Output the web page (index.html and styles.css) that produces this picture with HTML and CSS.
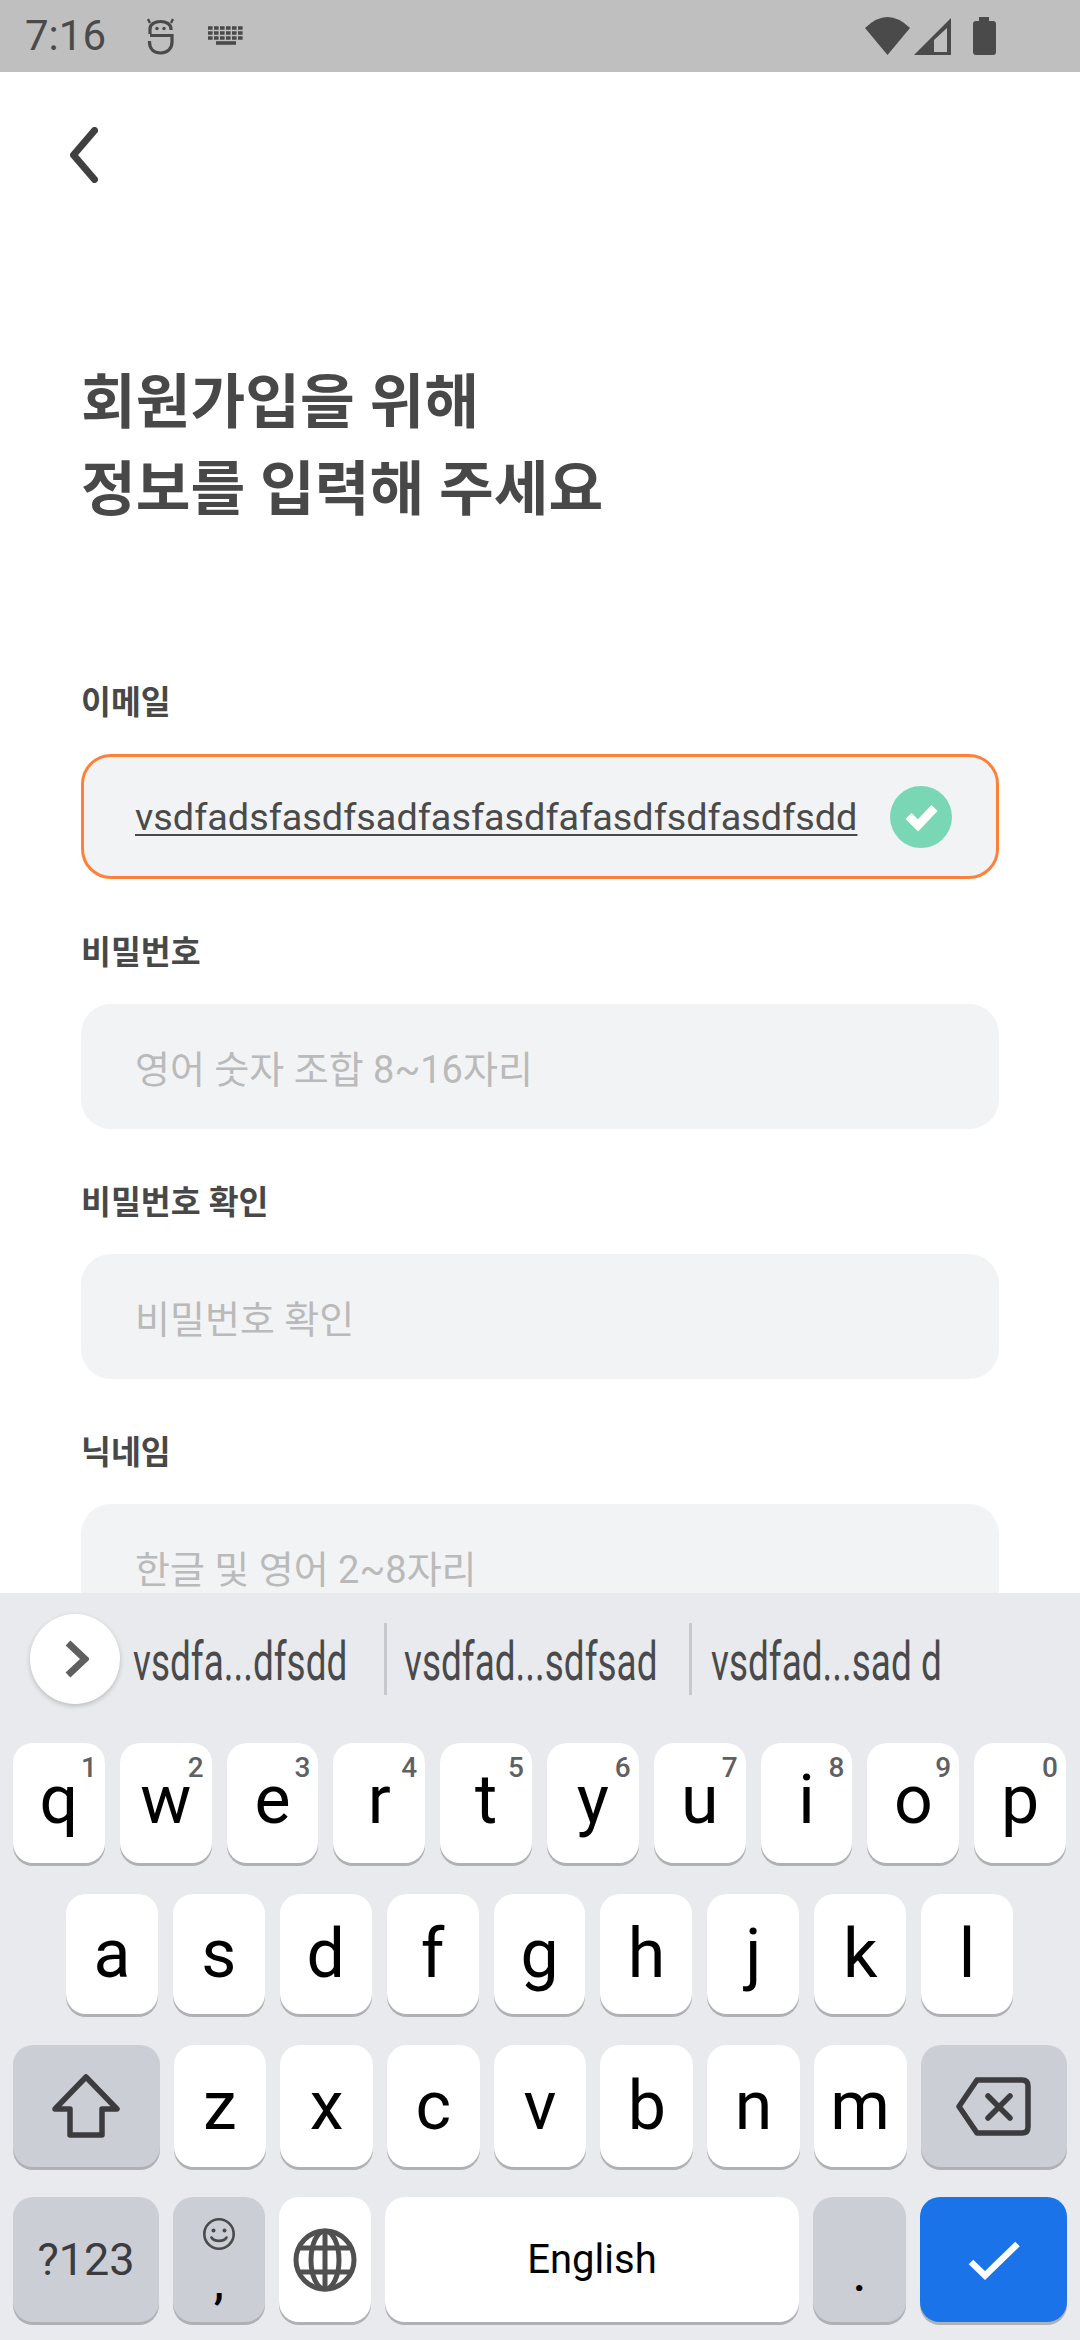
FILE: index.html
```html
<!DOCTYPE html>
<html lang="ko">
<head>
    <meta charset="UTF-8">
    <meta name="viewport" content="width=device-width, initial-scale=1.0">
    <title>회원가입</title>
    <link rel="stylesheet" href="styles.css">
</head>
<body>
<div class="page">

    <!-- Status bar -->
    <div class="status-bar">
        <span class="status-time">7:16</span>
        <svg class="status-face" width="27" height="38" viewBox="0 0 27 38" fill="none" stroke="#4a4a4a" stroke-width="3.2">
            <path d="M3 17V12C3 7 8 4.5 13.5 4.5S24 7 24 12V13"/>
            <path d="M3 6L1 2M24 6L26 2" stroke-width="2.4"/>
            <path d="M3 18.5H25V25C25 32 20 36 13.5 36S2.5 32 2.5 25V24"/>
            <circle cx="10" cy="11.5" r="1.7" fill="#4a4a4a" stroke="none"/>
            <circle cx="17" cy="11.5" r="1.7" fill="#4a4a4a" stroke="none"/>
        </svg>
        <svg class="status-kbd" width="36" height="19" viewBox="0 0 36 19" fill="none" stroke="#4a4a4a" stroke-width="3.6">
            <path d="M0 2H36M0 7H36M0 12H36" stroke-dasharray="4.6 1.4"/>
            <path d="M8 17H28"/>
        </svg>
        <div class="status-right">
            <svg width="45" height="38" viewBox="0 0 45 38" fill="#4a4a4a"><path d="M0 11Q22.5 -11 45 11L22.5 38Z"/></svg>
            <svg width="37" height="37" viewBox="0 0 37 37" fill="#4a4a4a"><path fill-rule="evenodd" d="M0 37L37 0V37ZM20 22V34H33V10Z"/></svg>
            <svg class="status-battery" width="23" height="38" viewBox="0 0 23 38" fill="#4a4a4a"><path d="M6 0H16V4H20Q23 4 23 7V35Q23 38 20 38H3Q0 38 0 35V7Q0 4 3 4H6Z"/></svg>
        </div>
    </div>

    <!-- Sign up form -->
    <div class="content">
        <div class="back-row">
            <svg width="28" height="56" viewBox="0 0 28 56" fill="none" stroke="#404040" stroke-width="7" stroke-linecap="round" stroke-linejoin="round">
                <path d="M24.5 3.5L3.5 28L24.5 52.5"/>
            </svg>
        </div>

        <div class="form">
            <h1 class="title">회원가입을 위해<br>정보를 입력해 주세요</h1>

            <div class="group">
                <div class="label">이메일</div>
                <div class="field field-active">
                    <span class="value">vsdfadsfasdfsadfasfasdfafasdfsdfasdfsdd</span>
                    <svg width="62" height="62" viewBox="0 0 62 62">
                        <circle cx="31" cy="31" r="31" fill="#7ad7b5"/>
                        <path d="M18.5 30L28 39.5L44.5 22" fill="none" stroke="#fff" stroke-width="8.5"/>
                    </svg>
                </div>
            </div>

            <div class="group">
                <div class="label">비밀번호</div>
                <div class="field"><span class="placeholder">영어 숫자 조합 8~16자리</span></div>
            </div>

            <div class="group">
                <div class="label">비밀번호 확인</div>
                <div class="field"><span class="placeholder">비밀번호 확인</span></div>
            </div>

            <div class="group">
                <div class="label">닉네임</div>
                <div class="field"><span class="placeholder">한글 및 영어 2~8자리</span></div>
            </div>
        </div>
    </div>

    <!-- Keyboard -->
    <div class="keyboard">
        <div class="strip">
            <div class="expand">
                <svg width="24" height="38" viewBox="0 0 24 38" fill="none" stroke="#5f5f5f" stroke-width="7"><path d="M3 3L20 19L3 35"/></svg>
            </div>
            <div class="sug sug-1"><span>vsdfa...dfsdd</span></div>
            <div class="sug sug-2"><span>vsdfad...sdfsad</span></div>
            <div class="sug sug-3"><span>vsdfad...sad d</span></div>
            <svg class="mic" width="42" height="58" viewBox="0 0 42 58" fill="#4a4a4c">
                <rect x="11" y="0" width="20" height="37" rx="10"/>
                <path d="M3 28A18 18 0 0 0 39 28" fill="none" stroke="#4a4a4c" stroke-width="6"/>
                <rect x="18" y="44" width="6" height="14"/>
            </svg>
        </div>

        <div class="key-row row-1">
            <div class="key"><i>1</i>q</div>
            <div class="key"><i>2</i>w</div>
            <div class="key"><i>3</i>e</div>
            <div class="key"><i>4</i>r</div>
            <div class="key"><i>5</i>t</div>
            <div class="key"><i>6</i>y</div>
            <div class="key"><i>7</i>u</div>
            <div class="key"><i>8</i>i</div>
            <div class="key"><i>9</i>o</div>
            <div class="key"><i>0</i>p</div>
        </div>

        <div class="key-row row-2">
            <div class="key">a</div>
            <div class="key">s</div>
            <div class="key">d</div>
            <div class="key">f</div>
            <div class="key">g</div>
            <div class="key">h</div>
            <div class="key">j</div>
            <div class="key">k</div>
            <div class="key">l</div>
        </div>

        <div class="key-row row-3">
            <div class="key key-side">
                <svg width="68" height="64" viewBox="0 0 68 64" fill="none" stroke="#3c3c3f" stroke-width="5.5" stroke-linejoin="round">
                    <path d="M34 3L65 35H50V61H18V35H3Z"/>
                </svg>
            </div>
            <div class="key">z</div>
            <div class="key">x</div>
            <div class="key">c</div>
            <div class="key">v</div>
            <div class="key">b</div>
            <div class="key">n</div>
            <div class="key">m</div>
            <div class="key key-side">
                <svg width="75" height="59" viewBox="0 0 75 59" fill="none" stroke="#3c3c3f" stroke-width="5.5" stroke-linejoin="round">
                    <path d="M21 3H66Q72 3 72 9V50Q72 56 66 56H21L3 29.5Z"/>
                    <path d="M32 19L54 41M54 19L32 41" stroke-linecap="round"/>
                </svg>
            </div>
        </div>

        <div class="key-row row-4">
            <div class="key key-gray key-sym">?123</div>
            <div class="key key-gray key-comma">
                <svg width="34" height="34" viewBox="0 0 34 34" fill="none" stroke="#4a4a4a" stroke-width="2.6">
                    <circle cx="17" cy="17" r="14.7"/>
                    <circle cx="11.5" cy="13.5" r="2" fill="#4a4a4a" stroke="none"/>
                    <circle cx="22.5" cy="13.5" r="2" fill="#4a4a4a" stroke="none"/>
                    <path d="M9.5 20.5C12 25 22 25 24.5 20.5" stroke-linecap="round"/>
                </svg>
                <span>,</span>
            </div>
            <div class="key key-globe">
                <svg width="64" height="64" viewBox="0 0 64 64" fill="none" stroke="#505050" stroke-width="5">
                    <circle cx="32" cy="32" r="29"/>
                    <ellipse cx="32" cy="32" rx="14" ry="29"/>
                    <path d="M32 3V61M6 20H58M6 44H58"/>
                </svg>
            </div>
            <div class="key key-space">English</div>
            <div class="key key-gray key-period"><span>.</span></div>
            <div class="key key-done">
                <svg width="52" height="40" viewBox="0 0 52 40" fill="none" stroke="#fff" stroke-width="6.5"><path d="M3 22L17 35.5L49.5 4"/></svg>
            </div>
        </div>
    </div>

</div>
</body>
</html>
```

FILE: styles.css
```css
* {
    box-sizing: border-box;
}
html, body {
    height: 2340px;
    overflow: hidden;
}
body {
    margin: 0;
    font-family: Roboto, "Noto Sans CJK KR", sans-serif;
    background-color: white;
}
.page {
    width: 1080px;
    height: 2340px;
    display: flex;
    flex-direction: column;
    overflow: hidden;
}

/* status bar */
.status-bar {
    flex: 0 0 72px;
    height: 72px;
    display: flex;
    align-items: center;
    padding-left: 25px;
    background-color: #bfbfbf;
}
.status-time {
    font-size: 42px;
    color: #4a4a4a;
    width: 122px;
    line-height: 72px;
}
.status-kbd {
    margin-left: 34px;
    margin-top: -2px;
}
.status-right {
    margin-left: auto;
    margin-right: 84px;
    display: flex;
    align-items: center;
    gap: 4px;
}
.status-battery {
    margin-left: 18px;
}

/* form */
.content {
    flex: 1;
    min-height: 0;
    overflow: hidden;
}
.back-row {
    padding: 55px 0 0 70px;
    height: 111px;
}
.form {
    padding: 0 81px;
}
.title {
    margin: 177px 0 147px;
    font-size: 59.5px;
    line-height: 87px;
    font-weight: 700;
    color: #484848;
}
.group {
    margin-bottom: 52px;
}
.label {
    font-size: 32.5px;
    line-height: 44px;
    font-weight: 700;
    color: #484848;
    margin-bottom: 29px;
}
.field {
    height: 125px;
    display: flex;
    align-items: center;
    justify-content: space-between;
    padding: 0 44px 0 51px;
    background-color: #f2f3f5;
    border: 3px solid transparent;
    border-radius: 30px;
    font-size: 38px;
}
.field-active {
    border-color: #ff8038;
}
.value {
    font-size: 37.8px;
    color: #4a4a4a;
    text-decoration: underline;
    text-decoration-thickness: 2px;
    text-underline-offset: 4px;
}
.placeholder {
    color: #bababa;
}

/* keyboard */
.keyboard {
    flex: 0 0 747px;
    background-color: #e8eaed;
    display: flex;
    flex-direction: column;
}
.strip {
    height: 150px;
    display: flex;
    align-items: center;
    padding: 0 39px 18px 30px;
}
.expand {
    flex: 0 0 90px;
    height: 90px;
    border-radius: 50%;
    background: white;
    box-shadow: 0 2px 5px rgba(0, 0, 0, 0.2);
    display: flex;
    align-items: center;
    justify-content: center;
    padding-left: 3px;
}
.sug {
    height: 72px;
    line-height: 78px;
    border-right: 3px solid #c6c8cd;
    white-space: nowrap;
}
.sug span {
    display: inline-block;
    font-size: 54px;
    color: #4a4a4c;
    transform: scaleX(0.684);
    transform-origin: left center;
}
.sug-1 {
    width: 267px;
    padding-left: 13px;
}
.sug-2 {
    width: 305px;
    padding-left: 17px;
}
.sug-3 {
    padding-left: 19px;
    border-right: none;
}
.mic {
    margin-left: auto;
    margin-top: -4px;
}
.key-row {
    display: flex;
    margin-bottom: 31px;
}
.row-1 {
    height: 120px;
    gap: 15px;
    padding: 0 14px 0 13px;
}
.row-1 .key {
    padding-bottom: 6px;
}
.row-2 {
    height: 120px;
    gap: 15px;
    padding: 0 67px 0 66px;
}
.row-3 {
    height: 122px;
    gap: 14px;
    padding: 0 13px;
}
.row-4 {
    height: 125px;
    gap: 14px;
    padding: 0 13px;
    margin: -1px 0 0;
}
.key {
    position: relative;
    flex: 1;
    display: flex;
    align-items: center;
    justify-content: center;
    background: white;
    border-radius: 20px;
    box-shadow: 0 3px 0 #b0b1b5;
    font-size: 68px;
    color: #000;
}
.key i {
    position: absolute;
    top: 8px;
    right: 8px;
    font-style: normal;
    font-weight: 500;
    font-size: 28px;
    color: #5f6063;
}
.key-side {
    flex: 0 0 146.5px;
    background-color: #cbced5;
}
.key-gray {
    background-color: #cbced5;
}
.key-sym {
    flex: 0 0 146px;
    font-size: 45px;
    color: #3c3c3f;
}
.key-comma {
    flex: 0 0 92px;
    flex-direction: column;
    justify-content: flex-start;
    padding-top: 20px;
    font-size: 46px;
    line-height: 44px;
}
.key-comma span {
    margin-top: 9px;
    font-weight: 500;
}
.key-globe {
    flex: 0 0 92px;
}
.key-space {
    flex: 0 0 414px;
    font-size: 40px;
}
.key-period {
    flex: 0 0 93px;
    align-items: flex-end;
    font-size: 46px;
    font-weight: 500;
    line-height: 60px;
    padding-bottom: 17px;
}
.key-done {
    flex: 0 0 147px;
    background-color: #1a73e8;
}
```
